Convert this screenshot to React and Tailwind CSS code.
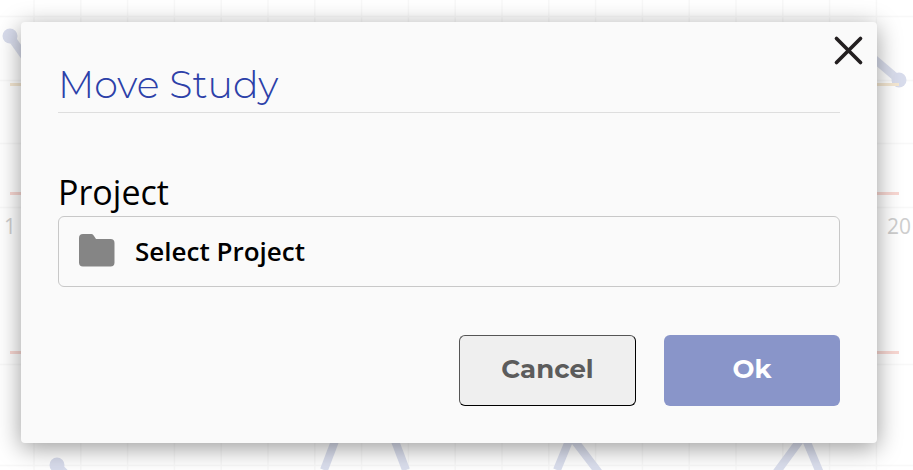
import { useState } from "react";

const columns = Array.from({ length: 19 }, (_, i) => 34 + i * 46.8);
const rows = [16, 80, 143, 207, 364, 465];

function BackgroundChart() {
  return (
    <svg
      className="absolute inset-0 h-full w-full"
      viewBox="0 0 913 470"
      preserveAspectRatio="xMidYMin slice"
      aria-hidden="true"
    >
      {/* Grid */}
      <g stroke="#f8f8f8" strokeWidth="1.5">
        {columns.map((x) => (
          <line key={x} x1={x} y1="0" x2={x} y2="470" />
        ))}
        {rows.map((y) => (
          <line key={y} x1="0" y1={y + 0.5} x2="913" y2={y + 0.5} />
        ))}
      </g>

      {/* Series */}
      <g stroke="#dadeed" fill="none" strokeWidth="8">
        <path d="M10 36L44 84" />
        <path d="M852 40L899 80" />
        <path d="M324 470L346 412" />
        <path d="M406 470L384 412" />
        <path d="M557 470L571 436L600 474" />
        <path d="M776 473L804 435L820 473" />
        <path d="M57 465L66 474" />
      </g>
      <g fill="#d8dcec">
        <circle cx="10" cy="36" r="7.5" />
        <circle cx="899" cy="80" r="7.5" />
        <circle cx="57" cy="465" r="7.5" />
      </g>

      {/* Control limits */}
      <path d="M10 84.5H899" stroke="#f5e8d3" strokeWidth="3" />
      <path d="M10 193.5H899M10 352.5H899" stroke="#f9d8d3" strokeWidth="3" />

      <g fill="#cecece" fontSize="21" fontFamily="'Open Sans', sans-serif" textAnchor="middle">
        <text x="10" y="234">1</text>
        <text x="899" y="234">20</text>
      </g>
    </svg>
  );
}

export default function App() {
  const [open, setOpen] = useState(true);

  function close() {
    setOpen(false);
  }

  return (
    <main className="relative min-h-screen overflow-hidden bg-white pt-[22px] pr-9 pb-[27px] pl-[21px] font-['Open_Sans',sans-serif]">
      <BackgroundChart />

      {open && (
        <section
          role="dialog"
          aria-labelledby="move-study-title"
          className="relative rounded bg-[#fafafa] px-[37px] pt-10 pb-[37px] shadow-[0_5px_24px_rgba(0,0,0,0.4)]"
        >
          {/* Close */}
          <button type="button" aria-label="Close" onClick={close} className="absolute top-3 right-3">
            <svg className="h-8 w-8" viewBox="0 0 32 32" fill="none" stroke="#231f20" strokeWidth="3.7" strokeLinecap="round">
              <path d="M3.5 4.5L27.5 28.5M27.5 4.5L3.5 28.5" />
            </svg>
          </button>

          <h1
            id="move-study-title"
            className="border-b border-[#dedede] pb-1 font-['Montserrat',sans-serif] text-[38px] leading-[46px] font-light text-[#2c40a8]"
          >
            Move Study
          </h1>

          {/* Project picker */}
          <div className="mt-14">
            <label htmlFor="project" className="block text-[34px] leading-[47px] font-normal text-black">
              Project
            </label>
            <button
              id="project"
              type="button"
              className="flex h-[71px] w-full items-center gap-5 rounded-md border border-[#c8c8c8] px-5 text-left text-[26px] font-semibold text-black"
            >
              <svg className="h-9 w-9" viewBox="0 0 36 36" fill="#858585">
                <path d="M4 0H12.5Q14 0 15 2L17 5H31.5Q35.5 5 35.5 9V28.5Q35.5 32.5 31.5 32.5H4Q0 32.5 0 28.5V4Q0 0 4 0Z" />
              </svg>
              Select Project
            </button>
          </div>

          {/* Actions */}
          <div className="mt-12 flex justify-end gap-7 font-['Montserrat',sans-serif] text-[26px] font-bold">
            <button
              type="button"
              onClick={close}
              className="h-[71px] w-[177px] rounded-md border border-t-[#555] border-r-black border-b-black border-l-[#555] bg-[#efefef] pb-0.5 text-[#5c5c5c]"
            >
              Cancel
            </button>
            <button type="button" onClick={close} className="h-[71px] w-44 rounded-md bg-[#8995c9] pb-0.5 text-white">
              Ok
            </button>
          </div>
        </section>
      )}
    </main>
  );
}
